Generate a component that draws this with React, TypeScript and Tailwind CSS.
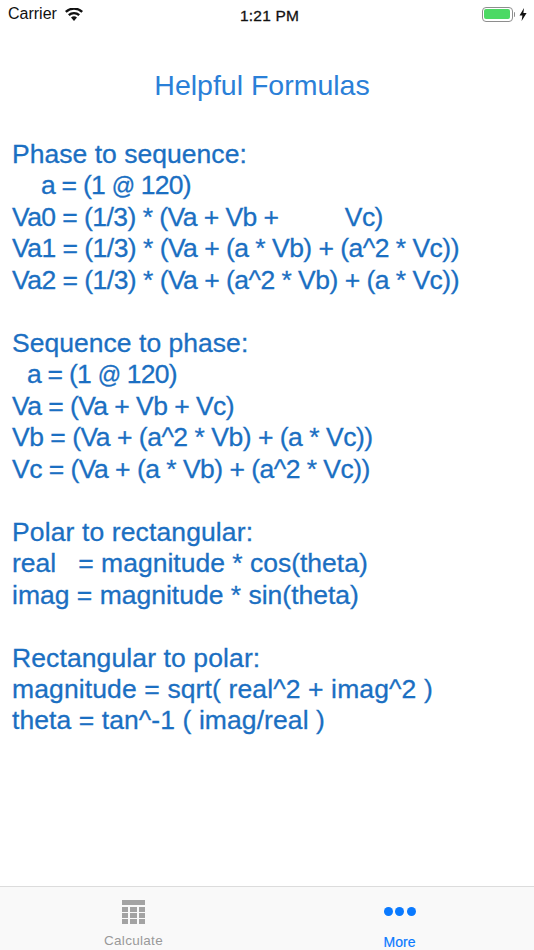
const lines = [
  { text: "Phase to sequence:", cls: "tracking-[0.03px]" },
  { text: "a = (1 ", at: "@", tail: " 120)", cls: "pl-[29px] tracking-[-0.75px]" },
  { text: "Va0 = (1/3) * (Va + Vb +         ", gapTail: "Vc)", cls: "tracking-[-0.55px]" },
  { text: "Va1 = (1/3) * (Va + (a * Vb) + (a^2 * Vc))", cls: "tracking-[-0.52px]" },
  { text: "Va2 = (1/3) * (Va + (a^2 * Vb) + (a * Vc))", cls: "tracking-[-0.52px]" },
  { text: " ", cls: "" },
  { text: "Sequence to phase:", cls: "tracking-[0.03px]" },
  { text: "a = (1 ", at: "@", tail: " 120)", cls: "pl-[15px] tracking-[-0.75px]" },
  { text: "Va = (Va + Vb + Vc)", cls: "tracking-[-0.55px]" },
  { text: "Vb = (Va + (a^2 * Vb) + (a * Vc))", cls: "tracking-[-0.48px]" },
  { text: "Vc = (Va + (a * Vb) + (a^2 * Vc))", cls: "tracking-[-0.52px]" },
  { text: " ", cls: "" },
  { text: "Polar to rectangular:", cls: "tracking-[0.12px]" },
  { text: "real   = magnitude * cos(theta)", cls: "" },
  { text: "imag = magnitude * sin(theta)", cls: "" },
  { text: " ", cls: "" },
  { text: "Rectangular to polar:", cls: "tracking-[0.11px]" },
  { text: "magnitude = sqrt( real^2 + imag^2 )", cls: "tracking-[0.12px]" },
  { text: "theta = tan^-1 ( imag/real )", cls: "tracking-[0.08px]" },
];

function Wifi() {
  return (
    <svg width="18" height="13" viewBox="0 0 18 13" fill="#111">
      <path d="M9 13 L6 9.6 A4.6 4.6 0 0 1 12 9.6 Z" />
      <path d="M4.6 8 L3 6.2 A9 9 0 0 1 15 6.2 L13.4 8 A6.6 6.6 0 0 0 4.6 8 Z" />
      <path d="M1.6 4.7 L0 3 A13.2 13.2 0 0 1 18 3 L16.4 4.7 A11 11 0 0 0 1.6 4.7 Z" />
    </svg>
  );
}

function Battery() {
  return (
    <div className="flex items-center">
      <div className="w-[31px] h-[15px] rounded-[4px] border border-[#8e8e8e] p-[1.5px]">
        <div className="w-full h-full rounded-[2px] bg-[#4cd964]" />
      </div>
      <div className="w-[1.5px] h-[5px] ml-[1px] bg-[#8e8e8e] rounded-r-sm" />
      <svg className="ml-[4px]" width="8" height="13" viewBox="0 0 8 13" fill="#111">
        <path d="M5 0 L0.5 7.4 H3.4 L2.6 13 L7.6 5 H4.4 Z" />
      </svg>
    </div>
  );
}

function TableIcon() {
  return (
    <div className="w-[23px]">
      <div className="h-[5px] bg-[#a3a3a3] mb-[2px]" />
      <div className="grid grid-cols-3 gap-x-[2px] gap-y-[1px]">
        {Array.from({ length: 9 }).map((_, i) => (
          <div key={i} className="h-[5px] bg-[#a3a3a3]" />
        ))}
      </div>
    </div>
  );
}

export default function App() {
  return (
    <div className="w-[534px] h-[950px] bg-white flex flex-col font-['Liberation_Sans',Arial,sans-serif] overflow-hidden">
      <div className="h-[27px] flex items-center justify-between relative pl-[8px] pr-[7px] pt-[1px] text-[#111] text-[16px]">
        <div className="flex items-center gap-[8px]">
          <span>Carrier</span>
          <Wifi />
        </div>
        <span className="absolute left-[240px] top-[4px] text-[15.5px] [-webkit-text-stroke:0.3px] tracking-[0.2px]">1:21 PM</span>
        <Battery />
      </div>

      <h1 className="mt-[40px] ml-[-10px] text-center text-[28.5px] leading-[36px] text-[#2a80d8]">Helpful Formulas</h1>

      <div className="flex-1 mt-[36px] pl-[12px] text-[26.5px] leading-[31.47px] text-[#1b6fc2] whitespace-pre [-webkit-text-stroke:0.3px]">
        {lines.map((line, i) => (
          <div key={i} className={"h-[31.47px] " + line.cls}>
            {line.text}
            {line.at && <span className="text-[23px] leading-[0]">{line.at}</span>}
            {line.tail}
            {line.gapTail && <span className="ml-[5px]">{line.gapTail}</span>}
          </div>
        ))}
      </div>

      <div className="h-[64px] border-t-[1.5px] border-[#dcdcdc] bg-[#f9f9f9] grid grid-cols-2">
        <div className="flex flex-col items-center pt-[13px] text-[#999999]">
          <TableIcon />
          <span className="mt-[9px] text-[13.5px] leading-[16px] tracking-[0.3px]">Calculate</span>
        </div>
        <div className="flex flex-col items-center pt-[20px] pr-[2px] text-[#0a7aff]">
          <div className="flex gap-[2.5px]">
            <div className="w-[9px] h-[9px] rounded-full bg-[#0a7aff]" />
            <div className="w-[9px] h-[9px] rounded-full bg-[#0a7aff]" />
            <div className="w-[9px] h-[9px] rounded-full bg-[#0a7aff]" />
          </div>
          <span className="mt-[18px] text-[14px] leading-[16px] [-webkit-text-stroke:0.2px]">More</span>
        </div>
      </div>
    </div>
  );
}
